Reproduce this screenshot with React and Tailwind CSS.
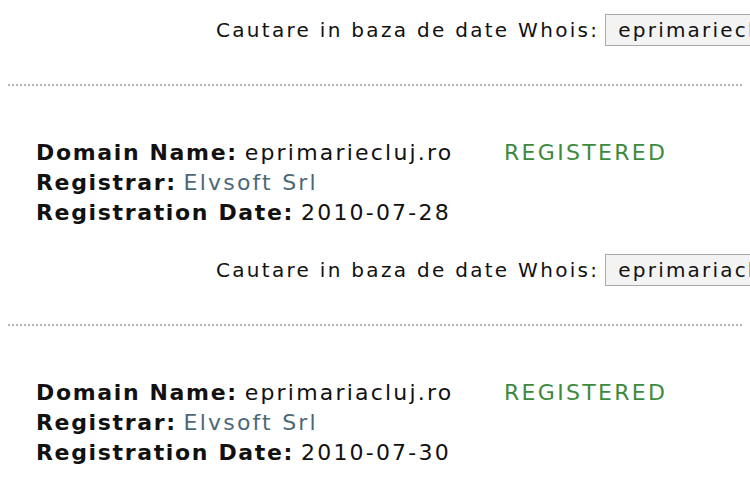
export default function App() {
  const results = [
    { domain: 'eprimariecluj.ro', date: '2010-07-28' },
    { domain: 'eprimariacluj.ro', date: '2010-07-30' },
  ];

  return (
    <div className="w-[750px] h-[500px] overflow-hidden bg-white text-[#111]" style={{ fontFamily: '"DejaVu Sans", Verdana, sans-serif' }}>
      <SearchRow value="eprimariecluj.ro" top="pt-[14px]" />
      <Divider />
      <Result r={results[0]} />
      <SearchRow value="eprimariacluj.ro" top="pt-[26px]" />
      <Divider />
      <Result r={results[1]} />
    </div>
  );
}

function SearchRow({ value, top }) {
  return (
    <div className={`flex items-center pl-[216px] ${top} whitespace-nowrap`}>
      <span className="text-[20px] leading-[32px] tracking-[2.3px]">Cautare in baza de date Whois:</span>
      <div className="ml-[6px] h-[32px] w-[220px] shrink-0 border border-[#a9a9a9] bg-[#f3f3f3] pl-[12px] text-[20px] leading-[30px] tracking-[2.2px]">
        {value}
      </div>
    </div>
  );
}

function Divider() {
  return <div className="mx-[8px] mt-[38px] border-t-2 border-dotted border-[#b5b5b5]" />;
}

function Result({ r }) {
  return (
    <div className="pl-[36px] pt-[52px] text-[22px] leading-[30px] whitespace-nowrap">
      <div className="flex">
        <div className="w-[468px]">
          <b className="tracking-[1.65px]">Domain Name:</b> <span className="tracking-[2.2px]">{r.domain}</span>
        </div>
        <span className="text-[#3d8a3d] tracking-[2.3px]">REGISTERED</span>
      </div>
      <div>
        <b className="tracking-[1.65px]">Registrar:</b> <span className="text-[#4c6878] tracking-[2.2px]">Elvsoft Srl</span>
      </div>
      <div>
        <b className="tracking-[1.65px]">Registration Date:</b> <span className="tracking-[2.2px]">{r.date}</span>
      </div>
    </div>
  );
}
